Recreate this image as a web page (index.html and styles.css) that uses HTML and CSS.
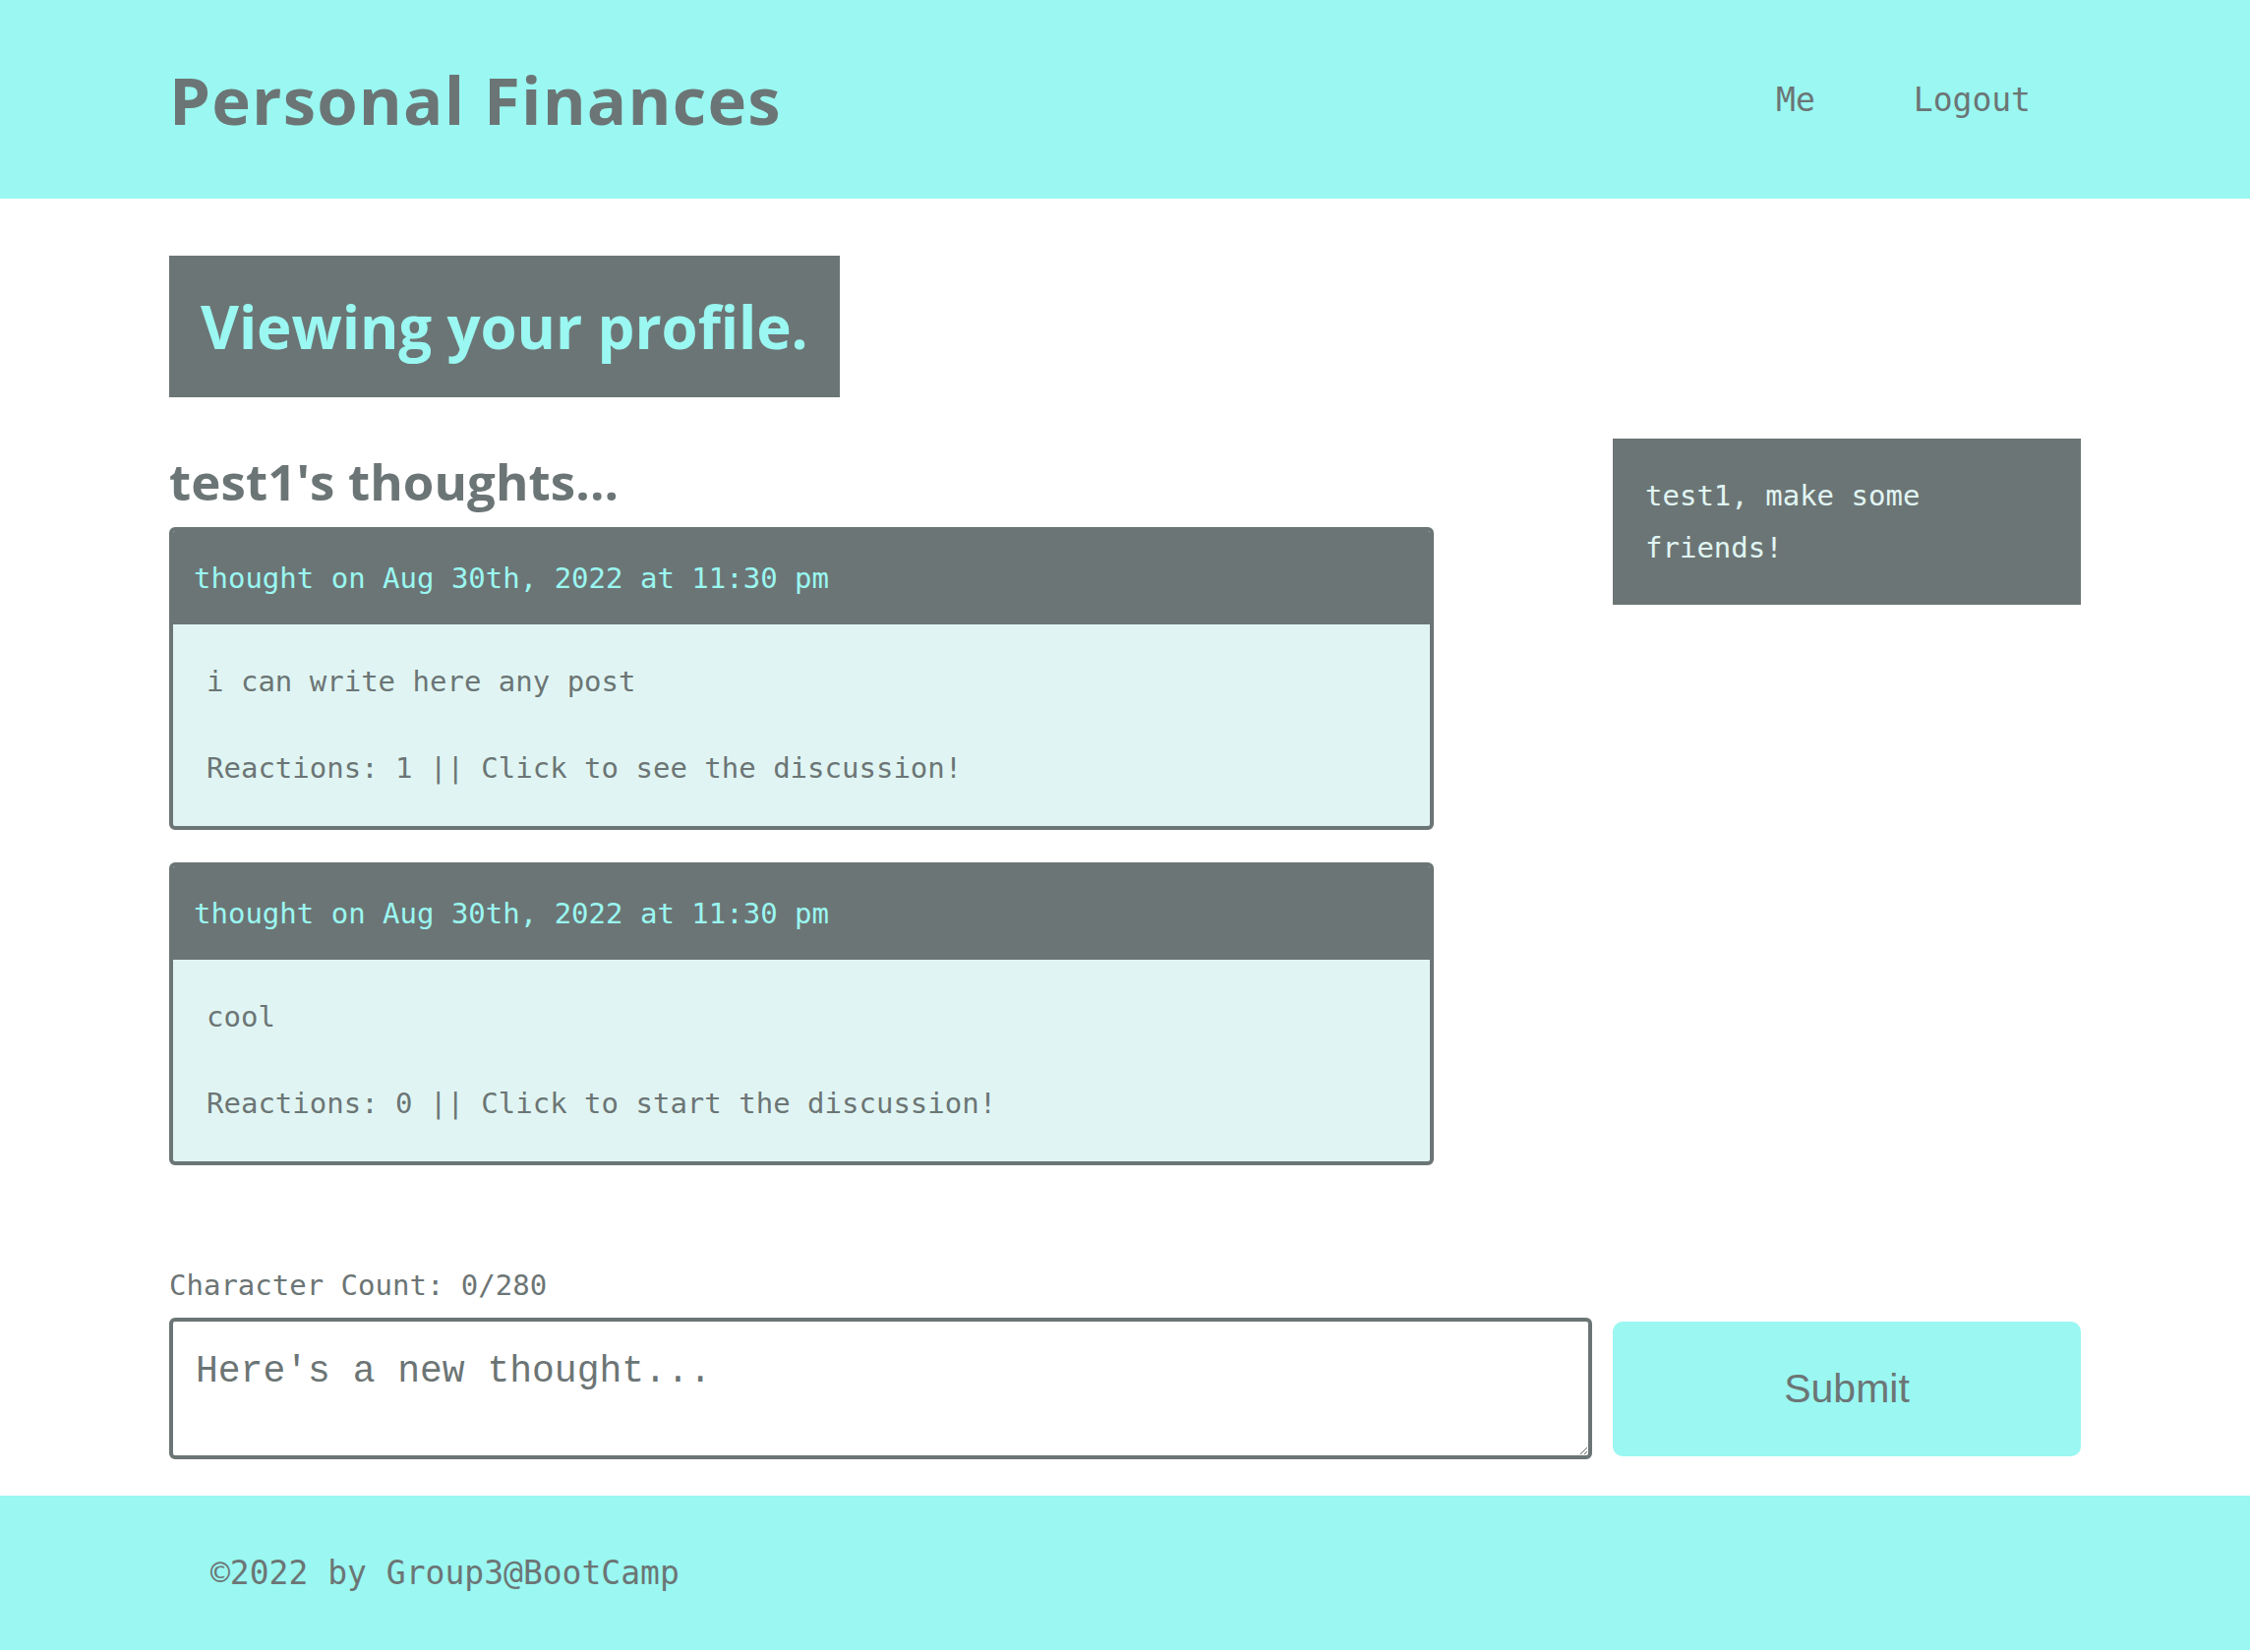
FILE: index.html
```html
<!DOCTYPE html>
<html lang="en">
<head>
<meta charset="utf-8">
<title>Personal Finances</title>
<link rel="stylesheet" href="styles.css">
</head>
<body>
<header class="site-header">
  <h1 class="brand">Personal Finances</h1>
  <nav class="nav">
    <a class="nav-link" href="#">Me</a>
    <a class="nav-link" href="#">Logout</a>
  </nav>
</header>
<main class="main">
  <div class="profile-banner">Viewing your profile.</div>
  <div class="content-row">
    <section class="thoughts">
      <h2 class="thoughts-title">test1's thoughts...</h2>
      <article class="card">
        <div class="card-header">thought on Aug 30th, 2022 at 11:30 pm</div>
        <div class="card-body">
          <p class="card-text">i can write here any post</p>
          <p class="card-text">Reactions: 1 || Click to see the discussion!</p>
        </div>
      </article>
      <article class="card">
        <div class="card-header">thought on Aug 30th, 2022 at 11:30 pm</div>
        <div class="card-body">
          <p class="card-text">cool</p>
          <p class="card-text">Reactions: 0 || Click to start the discussion!</p>
        </div>
      </article>
    </section>
    <aside class="friends">test1, make some friends!</aside>
  </div>
  <form class="thought-form">
    <p class="char-count">Character Count: 0/280</p>
    <div class="form-row">
      <textarea class="thought-input" placeholder="Here's a new thought..."></textarea>
      <button class="submit-btn" type="button">Submit</button>
    </div>
  </form>
</main>
<footer class="site-footer">©2022 by Group3@BootCamp</footer>
</body>
</html>
```
FILE: styles.css
```css
* { box-sizing: border-box; }
html, body { margin: 0; padding: 0; background: #ffffff; }
body {
  font-family: "DejaVu Sans Mono", monospace;
  color: #6c7575;
}
.site-header {
  background: #9af7f1;
  height: 202px;
  padding: 0 172px;
  display: flex;
  align-items: center;
  justify-content: space-between;
}
.brand {
  margin: 0;
  font-family: "Open Sans", Lato, sans-serif;
  font-weight: 700;
  font-size: 67px;
  color: #6c7575;
  letter-spacing: 1.2px;
}
.nav { display: flex; }
.nav-link {
  padding: 0 50px;
  font-size: 33px;
  color: #6c7575;
  text-decoration: none;
}
.nav-link:last-child { padding-right: 51px; }
.main { padding: 0 172px; }
.profile-banner {
  display: inline-flex;
  align-items: center;
  margin-top: 58px;
  height: 144px;
  padding: 0 32px;
  background: #6c7575;
  color: #9af7f1;
  font-family: "Open Sans", Lato, sans-serif;
  font-weight: 700;
  font-size: 60px;
  letter-spacing: -0.1px;
}
.content-row {
  display: flex;
  align-items: flex-start;
  justify-content: space-between;
  margin-top: 42px;
}
.thoughts { width: 1286px; }
.thoughts-title {
  margin: 12px 0 16px;
  font-family: "Open Sans", Lato, sans-serif;
  font-weight: 700;
  font-size: 51px;
  line-height: 62px;
  letter-spacing: 0.1px;
  color: #6c7575;
}
.card {
  border: 4px solid #6c7575;
  border-radius: 6px;
  background: #e0f5f3;
  overflow: hidden;
  margin-bottom: 33px;
}
.card:last-child { margin-bottom: 0; }
.card-header {
  background: #6c7575;
  color: #9af7f1;
  font-size: 29px;
  height: 95px;
  display: flex;
  align-items: center;
  padding: 0 21px;
}
.card-body { padding: 36px 34px 37px; }
.card-text {
  margin: 0;
  font-size: 29px;
  line-height: 44px;
}
.card-text + .card-text { margin-top: 44px; }
.friends {
  width: 476px;
  background: #6c7575;
  color: #e0f5f3;
  font-size: 29px;
  line-height: 53px;
  padding: 32px 33px 31px;
}
.thought-form { margin-top: 100px; }
.char-count {
  margin: 0 0 11px;
  font-size: 29px;
  line-height: 44px;
}
.form-row {
  display: flex;
  align-items: center;
  gap: 21px;
}
.thought-input {
  flex: 1;
  height: 144px;
  border: 4px solid #6c7575;
  border-radius: 6px;
  padding: 29px 23px 15px;
  font-family: "Liberation Mono", monospace;
  font-size: 38px;
  line-height: 1.15;
  color: #6c7575;
  resize: vertical;
  outline: none;
}
.thought-input::placeholder { color: #6c7575; opacity: 1; }
.submit-btn {
  width: 476px;
  height: 137px;
  border: none;
  border-radius: 10px;
  background: #9af7f1;
  color: #6c7575;
  font-family: "Liberation Sans", Arial, sans-serif;
  font-size: 41px;
}
.site-footer {
  margin-top: 37px;
  background: #9af7f1;
  height: 157px;
  display: flex;
  align-items: center;
  padding-left: 214px;
  font-size: 33px;
  color: #6c7575;
}
```
